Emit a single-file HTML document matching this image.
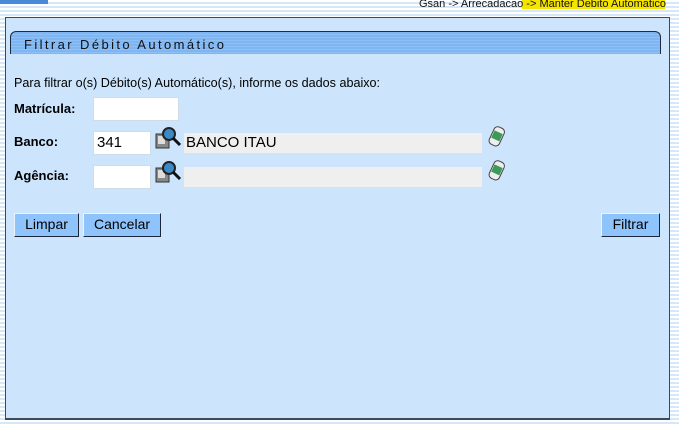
<!DOCTYPE html>
<html><head><style>
body{margin:0;width:679px;height:425px;overflow:hidden;position:relative;font-family:"Liberation Sans",Arial,sans-serif;
background:repeating-linear-gradient(#ffffff 0 2px,#d6e8f8 2px 4px);}
.a{position:absolute}
.panel{left:5px;top:17px;width:663px;height:400px;background:#cce5fc;border:1px solid #3c4a5c;border-bottom:2px solid #3c4a5c;border-right:1px solid #3c4a5c}
.title{left:10px;top:31px;width:651px;height:23px;background:repeating-linear-gradient(#7fb6f2 0 2px,#8cc0f6 2px 3px);border:1px solid #1e2a40;border-bottom:none;border-radius:6px 6px 0 0;font-size:13px;letter-spacing:2.4px;color:#111;line-height:25px;padding-left:13px;box-sizing:border-box}
.lbl{font-size:13px;font-weight:bold;color:#000}
.inp{background:#fff;border:1px solid #d0dbe8;box-sizing:border-box;font-size:15px;padding-left:3px;line-height:21px}
.gray{background:#efefef;font-size:15px;line-height:20px;padding-left:2px;box-sizing:border-box}
.btn{background:#8fc3fb;border:1px solid #1b2638;border-top-color:#eaf4ff;border-left-color:#eaf4ff;box-sizing:border-box;font-size:14px;text-align:center;line-height:21px;color:#000}
</style></head><body>
<div class="a" style="left:0;top:0;width:48px;height:4px;background:#4a88d8"></div>
<div class="a" style="left:522px;top:0;width:143px;height:9px;background:#f5e400"></div>
<div class="a" style="left:419px;top:-2px;font-size:11px;color:#111;line-height:13px;white-space:nowrap">Gsan -&gt; Arrecadacao -&gt; Manter Debito Automatico</div>
<div class="a panel"></div>
<div class="a title">Filtrar Débito Automático</div>
<div class="a" style="left:14px;top:76px;font-size:12.6px">Para filtrar o(s) Débito(s) Automático(s), informe os dados abaixo:</div>
<div class="a lbl" style="left:14px;top:101px">Matrícula:</div>
<div class="a inp" style="left:93px;top:97px;width:86px;height:24px"></div>
<div class="a lbl" style="left:14px;top:134px">Banco:</div>
<div class="a inp" style="left:93px;top:131px;width:58px;height:24px">341</div>
<div class="a lbl" style="left:14px;top:168px">Agência:</div>
<div class="a inp" style="left:93px;top:165px;width:58px;height:24px"></div>
<div class="a gray" style="left:184px;top:133px;width:298px;height:20px">BANCO ITAU</div>
<div class="a gray" style="left:184px;top:167px;width:298px;height:20px"></div>
<svg class="a" style="left:154px;top:126px" width="28" height="26"><rect x="2" y="8" width="13" height="14" fill="#888" stroke="#333"/><rect x="4" y="10" width="7" height="8" fill="#ddd"/><circle cx="15" cy="8" r="6" fill="#3a8ac8" stroke="#222" stroke-width="2"/><line x1="19" y1="12" x2="26" y2="19" stroke="#111" stroke-width="3"/></svg>
<svg class="a" style="left:154px;top:160px" width="28" height="26"><rect x="2" y="8" width="13" height="14" fill="#888" stroke="#333"/><rect x="4" y="10" width="7" height="8" fill="#ddd"/><circle cx="15" cy="8" r="6" fill="#3a8ac8" stroke="#222" stroke-width="2"/><line x1="19" y1="12" x2="26" y2="19" stroke="#111" stroke-width="3"/></svg>
<svg class="a" style="left:486px;top:125px" width="22" height="24"><g transform="rotate(25 11 12)"><rect x="5" y="2" width="11" height="19" rx="4" fill="#eee" stroke="#444"/><rect x="6" y="7" width="9" height="8" fill="#3d9b5a"/></g></svg>
<svg class="a" style="left:486px;top:159px" width="22" height="24"><g transform="rotate(25 11 12)"><rect x="5" y="2" width="11" height="19" rx="4" fill="#eee" stroke="#444"/><rect x="6" y="7" width="9" height="8" fill="#3d9b5a"/></g></svg>
<div class="a btn" style="left:14px;top:213px;width:65px;height:24px">Limpar</div>
<div class="a btn" style="left:83px;top:213px;width:78px;height:24px">Cancelar</div>
<div class="a btn" style="left:601px;top:213px;width:59px;height:24px">Filtrar</div>
</body></html>
